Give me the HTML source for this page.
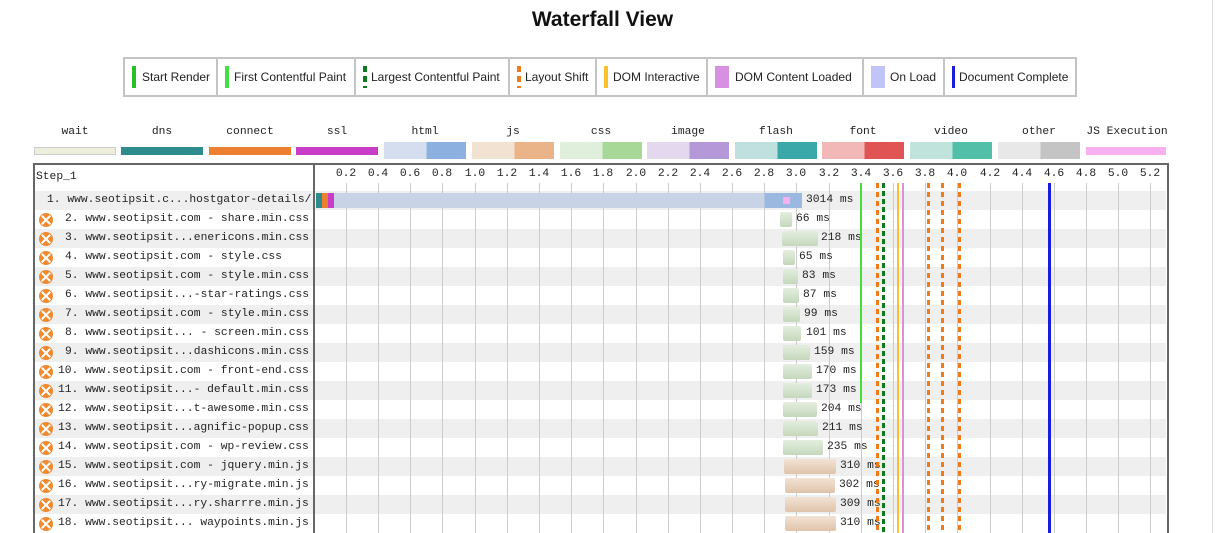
<!DOCTYPE html>
<html><head><meta charset="utf-8"><style>
*{margin:0;padding:0;box-sizing:border-box}
html,body{width:1231px;height:533px;overflow:hidden}
body{background:#fff;position:relative;font-family:"Liberation Sans",sans-serif}
.a{position:absolute}
h1{position:absolute;top:8px;left:0;width:1205px;text-align:center;font-size:21px;font-weight:bold;color:#111}
.lg{position:absolute;top:57px;height:40px;border:2px solid #c4c4c4;font-size:12px;color:#222;line-height:36px;padding-left:22px;white-space:nowrap;overflow:hidden}
.lg i{position:absolute;left:7px;top:7px;width:4px;height:22px}
.m{font-family:"Liberation Mono",monospace;font-size:11.3px;color:#222}
.lb{position:absolute;top:126px;width:82px;text-align:center}
.lbar{position:absolute;width:82px}
.row{position:absolute;left:35px;width:1131px;height:19px}
.g{background:#efefef}
.lab{position:absolute;height:19px;line-height:19px;white-space:pre}
.ic{position:absolute;left:39px;width:14px;height:14px;border-radius:50%;background:#ef8a2e}
.ic:before,.ic:after{content:"";position:absolute;left:6px;top:1px;width:2px;height:12px;background:#fff;transform:rotate(45deg)}
.ic:after{transform:rotate(-45deg)}
.vg{position:absolute;top:183px;width:1px;height:350px;background:#ccc}
.tk{position:absolute;top:168px;width:30px;text-align:center}
.bar{position:absolute;height:15px}
.css{background:linear-gradient(#e4eedf,#c4d8bc);border-radius:2px}
.js{background:linear-gradient(#f2e2d4,#e0c4aa);border-radius:2px}
.ms{position:absolute;line-height:19px}
.dash{position:absolute;top:183px;width:3px;height:350px;background:repeating-linear-gradient(#f07b1b 0 5px,transparent 5px 9px)}
</style></head><body>
<h1>Waterfall View</h1>
<div class="a" style="left:1212px;top:0;width:1px;height:533px;background:#ddd"></div>

<div class="lg" style="left:123px;width:95px;padding-left:17px"><i style="background:#28c028"></i>Start Render</div>
<div class="lg" style="left:216px;width:140px;padding-left:16px"><i style="background:#3fe03f"></i>First Contentful Paint</div>
<div class="lg" style="left:354px;width:156px;padding-left:15px"><i style="background:repeating-linear-gradient(#0a7a1a 0 6px,transparent 6px 10px);width:4px"></i>Largest Contentful Paint</div>
<div class="lg" style="left:508px;width:89px;padding-left:15px"><i style="background:repeating-linear-gradient(#f07b1b 0 6px,transparent 6px 10px)"></i>Layout Shift</div>
<div class="lg" style="left:595px;width:113px;padding-left:16px"><i style="background:#fbc02d"></i>DOM Interactive</div>
<div class="lg" style="left:706px;width:158px;padding-left:27px"><i style="background:#d890e0;width:14px"></i>DOM Content Loaded</div>
<div class="lg" style="left:862px;width:83px;padding-left:26px"><i style="background:#c0c4f8;width:14px"></i>On Load</div>
<div class="lg" style="left:943px;width:134px;padding-left:14px"><i style="background:#1a1ae0;width:3px"></i>Document Complete</div>

<div class="m lb" style="left:34px">wait</div><div class="lbar" style="left:34px;top:147px;height:8px;background:#eeeedc;border:1px solid #ccc"></div>
<div class="m lb" style="left:121px">dns</div><div class="lbar" style="left:121px;top:147px;height:8px;background:#2f8c8c"></div>
<div class="m lb" style="left:209px">connect</div><div class="lbar" style="left:209px;top:147px;height:8px;background:#ec7f30"></div>
<div class="m lb" style="left:296px">ssl</div><div class="lbar" style="left:296px;top:147px;height:8px;background:#c83cc8"></div>
<div class="m lb" style="left:384px">html</div><div class="lbar" style="left:384px;top:142px;height:17px;background:linear-gradient(90deg,#d4deee 52%,#8cb0e0 52%)"></div>
<div class="m lb" style="left:472px">js</div><div class="lbar" style="left:472px;top:142px;height:17px;background:linear-gradient(90deg,#f2e2d2 52%,#eab488 52%)"></div>
<div class="m lb" style="left:560px">css</div><div class="lbar" style="left:560px;top:142px;height:17px;background:linear-gradient(90deg,#e0eedc 52%,#a8d898 52%)"></div>
<div class="m lb" style="left:647px">image</div><div class="lbar" style="left:647px;top:142px;height:17px;background:linear-gradient(90deg,#e4d8ee 52%,#b498d8 52%)"></div>
<div class="m lb" style="left:735px">flash</div><div class="lbar" style="left:735px;top:142px;height:17px;background:linear-gradient(90deg,#bfe0de 52%,#3aa8a8 52%)"></div>
<div class="m lb" style="left:822px">font</div><div class="lbar" style="left:822px;top:142px;height:17px;background:linear-gradient(90deg,#f2b8b8 52%,#e05454 52%)"></div>
<div class="m lb" style="left:910px">video</div><div class="lbar" style="left:910px;top:142px;height:17px;background:linear-gradient(90deg,#c0e4dc 52%,#52c0a8 52%)"></div>
<div class="m lb" style="left:998px">other</div><div class="lbar" style="left:998px;top:142px;height:17px;background:linear-gradient(90deg,#e8e8e8 52%,#c4c4c4 52%)"></div>
<div class="m lb" style="left:1082px;width:90px">JS Execution</div><div class="lbar" style="left:1086px;top:147px;height:8px;width:80px;background:#f8b0f0"></div>

<div class="row g" style="top:191px"></div>
<div class="row g" style="top:229px"></div>
<div class="row g" style="top:267px"></div>
<div class="row g" style="top:305px"></div>
<div class="row g" style="top:343px"></div>
<div class="row g" style="top:381px"></div>
<div class="row g" style="top:419px"></div>
<div class="row g" style="top:457px"></div>
<div class="row g" style="top:495px"></div>

<div class="a" style="left:33px;top:163px;width:1136px;height:380px;border:2px solid #666"></div>
<div class="a" style="left:313px;top:163px;width:2px;height:370px;background:#666"></div>
<div class="m a" style="left:36px;top:171px">Step_1</div>

<div class="vg" style="left:346px"></div><div class="m tk" style="left:331px">0.2</div>
<div class="vg" style="left:378px"></div><div class="m tk" style="left:363px">0.4</div>
<div class="vg" style="left:410px"></div><div class="m tk" style="left:395px">0.6</div>
<div class="vg" style="left:442px"></div><div class="m tk" style="left:427px">0.8</div>
<div class="vg" style="left:475px"></div><div class="m tk" style="left:460px">1.0</div>
<div class="vg" style="left:507px"></div><div class="m tk" style="left:492px">1.2</div>
<div class="vg" style="left:539px"></div><div class="m tk" style="left:524px">1.4</div>
<div class="vg" style="left:571px"></div><div class="m tk" style="left:556px">1.6</div>
<div class="vg" style="left:603px"></div><div class="m tk" style="left:588px">1.8</div>
<div class="vg" style="left:636px"></div><div class="m tk" style="left:621px">2.0</div>
<div class="vg" style="left:668px"></div><div class="m tk" style="left:653px">2.2</div>
<div class="vg" style="left:700px"></div><div class="m tk" style="left:685px">2.4</div>
<div class="vg" style="left:732px"></div><div class="m tk" style="left:717px">2.6</div>
<div class="vg" style="left:764px"></div><div class="m tk" style="left:749px">2.8</div>
<div class="vg" style="left:796px"></div><div class="m tk" style="left:781px">3.0</div>
<div class="vg" style="left:829px"></div><div class="m tk" style="left:814px">3.2</div>
<div class="vg" style="left:861px"></div><div class="m tk" style="left:846px">3.4</div>
<div class="vg" style="left:893px"></div><div class="m tk" style="left:878px">3.6</div>
<div class="vg" style="left:925px"></div><div class="m tk" style="left:910px">3.8</div>
<div class="vg" style="left:957px"></div><div class="m tk" style="left:942px">4.0</div>
<div class="vg" style="left:990px"></div><div class="m tk" style="left:975px">4.2</div>
<div class="vg" style="left:1022px"></div><div class="m tk" style="left:1007px">4.4</div>
<div class="vg" style="left:1054px"></div><div class="m tk" style="left:1039px">4.6</div>
<div class="vg" style="left:1086px"></div><div class="m tk" style="left:1071px">4.8</div>
<div class="vg" style="left:1118px"></div><div class="m tk" style="left:1103px">5.0</div>
<div class="vg" style="left:1150px"></div><div class="m tk" style="left:1135px">5.2</div>

<div class="m lab" style="left:47px;top:191px">1. www.seotipsit.c...hostgator-details/</div>
<div class="m lab" style="left:65px;top:210px">2. www.seotipsit.com - share.min.css</div>
<div class="m lab" style="left:65px;top:229px">3. www.seotipsit...enericons.min.css</div>
<div class="m lab" style="left:65px;top:248px">4. www.seotipsit.com - style.css</div>
<div class="m lab" style="left:65px;top:267px">5. www.seotipsit.com - style.min.css</div>
<div class="m lab" style="left:65px;top:286px">6. www.seotipsit...-star-ratings.css</div>
<div class="m lab" style="left:65px;top:305px">7. www.seotipsit.com - style.min.css</div>
<div class="m lab" style="left:65px;top:324px">8. www.seotipsit... - screen.min.css</div>
<div class="m lab" style="left:65px;top:343px">9. www.seotipsit...dashicons.min.css</div>
<div class="m lab" style="left:58px;top:362px">10. www.seotipsit.com - front-end.css</div>
<div class="m lab" style="left:58px;top:381px">11. www.seotipsit...- default.min.css</div>
<div class="m lab" style="left:58px;top:400px">12. www.seotipsit...t-awesome.min.css</div>
<div class="m lab" style="left:58px;top:419px">13. www.seotipsit...agnific-popup.css</div>
<div class="m lab" style="left:58px;top:438px">14. www.seotipsit.com - wp-review.css</div>
<div class="m lab" style="left:58px;top:457px">15. www.seotipsit.com - jquery.min.js</div>
<div class="m lab" style="left:58px;top:476px">16. www.seotipsit...ry-migrate.min.js</div>
<div class="m lab" style="left:58px;top:495px">17. www.seotipsit...ry.sharrre.min.js</div>
<div class="m lab" style="left:58px;top:514px">18. www.seotipsit... waypoints.min.js</div>
<div class="ic" style="top:213px"></div><div class="ic" style="top:232px"></div><div class="ic" style="top:251px"></div><div class="ic" style="top:270px"></div><div class="ic" style="top:289px"></div><div class="ic" style="top:308px"></div><div class="ic" style="top:327px"></div><div class="ic" style="top:346px"></div><div class="ic" style="top:365px"></div><div class="ic" style="top:384px"></div><div class="ic" style="top:403px"></div><div class="ic" style="top:422px"></div><div class="ic" style="top:441px"></div><div class="ic" style="top:460px"></div><div class="ic" style="top:479px"></div><div class="ic" style="top:498px"></div><div class="ic" style="top:517px"></div>

<div class="bar" style="left:316px;top:193px;width:6px;background:#2f8c8c"></div>
<div class="bar" style="left:322px;top:193px;width:6px;background:#ec7f30"></div>
<div class="bar" style="left:328px;top:193px;width:6px;background:#c83cc8"></div>
<div class="bar" style="left:334px;top:193px;width:468px;background:linear-gradient(90deg,#c8d4e6 92%,#9ab8e0 92%)"></div>
<div class="bar" style="left:783px;top:197px;width:7px;height:7px;background:#f8b0f0"></div>
<div class="m ms" style="left:806px;top:191px">3014 ms</div>

<div class="bar css" style="left:780px;top:212px;width:12px"></div><div class="m ms" style="left:796px;top:210px">66 ms</div>
<div class="bar css" style="left:782px;top:231px;width:36px"></div><div class="m ms" style="left:821px;top:229px">218 ms</div>
<div class="bar css" style="left:783px;top:250px;width:12px"></div><div class="m ms" style="left:799px;top:248px">65 ms</div>
<div class="bar css" style="left:783px;top:269px;width:15px"></div><div class="m ms" style="left:802px;top:267px">83 ms</div>
<div class="bar css" style="left:783px;top:288px;width:16px"></div><div class="m ms" style="left:803px;top:286px">87 ms</div>
<div class="bar css" style="left:783px;top:307px;width:17px"></div><div class="m ms" style="left:804px;top:305px">99 ms</div>
<div class="bar css" style="left:783px;top:326px;width:18px"></div><div class="m ms" style="left:806px;top:324px">101 ms</div>
<div class="bar css" style="left:783px;top:345px;width:27px"></div><div class="m ms" style="left:814px;top:343px">159 ms</div>
<div class="bar css" style="left:783px;top:364px;width:29px"></div><div class="m ms" style="left:816px;top:362px">170 ms</div>
<div class="bar css" style="left:783px;top:383px;width:29px"></div><div class="m ms" style="left:816px;top:381px">173 ms</div>
<div class="bar css" style="left:783px;top:402px;width:34px"></div><div class="m ms" style="left:821px;top:400px">204 ms</div>
<div class="bar css" style="left:783px;top:421px;width:35px"></div><div class="m ms" style="left:822px;top:419px">211 ms</div>
<div class="bar css" style="left:783px;top:440px;width:40px"></div><div class="m ms" style="left:827px;top:438px">235 ms</div>
<div class="bar js" style="left:784px;top:459px;width:52px"></div><div class="m ms" style="left:840px;top:457px">310 ms</div>
<div class="bar js" style="left:785px;top:478px;width:50px"></div><div class="m ms" style="left:839px;top:476px">302 ms</div>
<div class="bar js" style="left:785px;top:497px;width:51px"></div><div class="m ms" style="left:840px;top:495px">309 ms</div>
<div class="bar js" style="left:785px;top:516px;width:51px"></div><div class="m ms" style="left:840px;top:514px">310 ms</div>

<div class="a" style="left:860px;top:183px;width:2px;height:220px;background:#3fe03f"></div>
<div class="dash" style="left:876px"></div>
<div class="a" style="left:882px;top:183px;width:3px;height:350px;background:repeating-linear-gradient(#0a7a1a 0 5px,transparent 5px 8px)"></div>
<div class="a" style="left:897px;top:183px;width:2px;height:350px;background:#fbc02d"></div>
<div class="a" style="left:902px;top:183px;width:2px;height:350px;background:#d890e0"></div>
<div class="dash" style="left:927px"></div>
<div class="dash" style="left:941px"></div>
<div class="dash" style="left:958px"></div>
<div class="a" style="left:1048px;top:183px;width:3px;height:350px;background:#1a1ae0"></div>
</body></html>
